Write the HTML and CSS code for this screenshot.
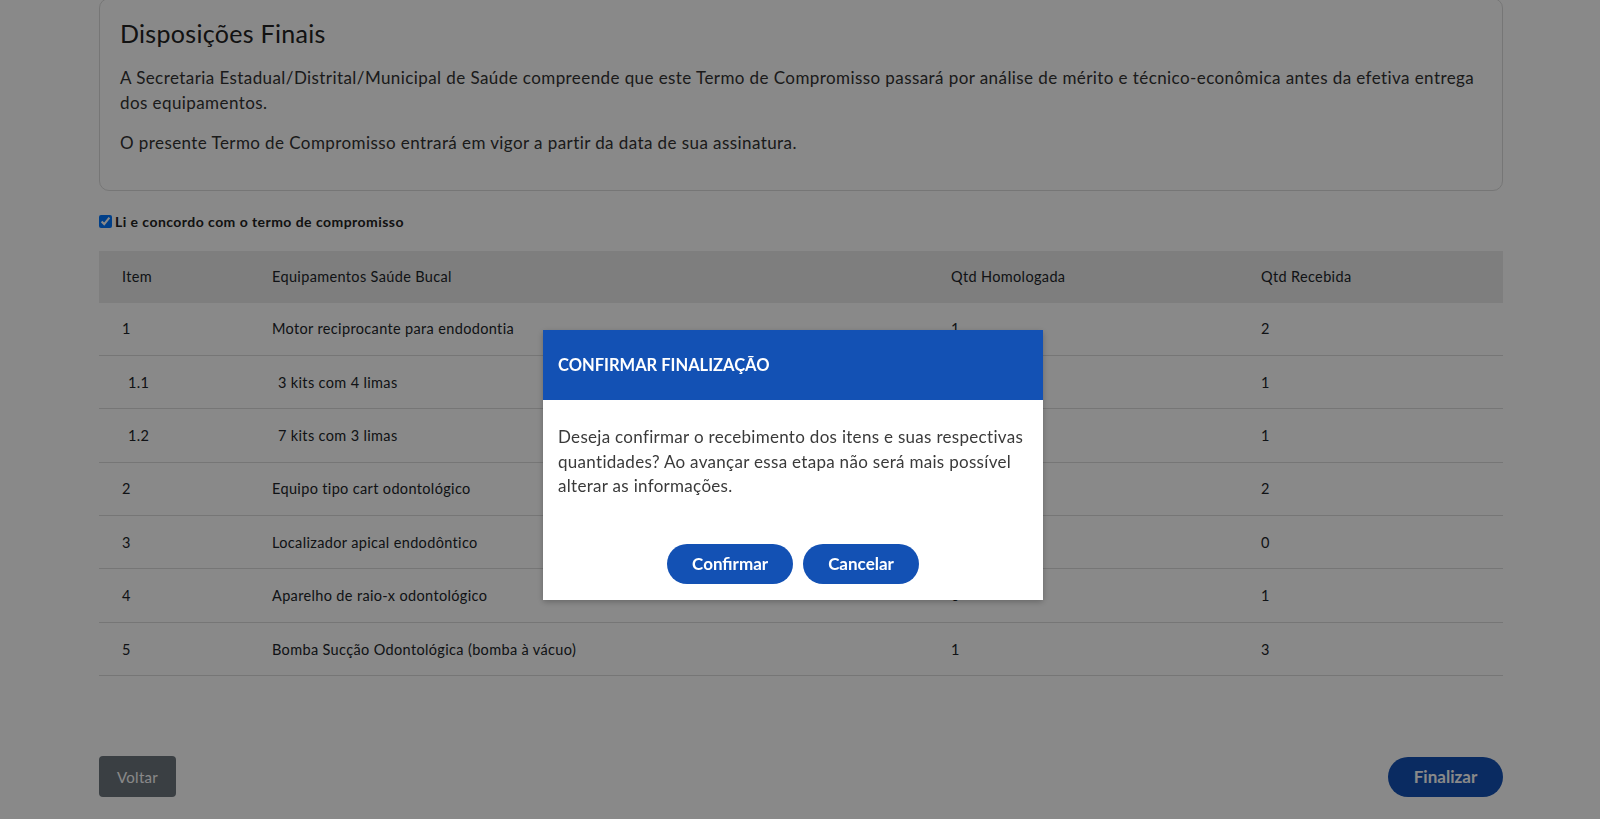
FILE: index.html
```html
<!DOCTYPE html>
<html lang="pt-BR">
<head>
<meta charset="utf-8">
<title>Termo de Compromisso</title>
<link rel="stylesheet" href="styles.css">
</head>
<body>
<div class="page">
  <section class="card">
    <h2 class="card-title">Disposições Finais</h2>
    <p class="card-text">A Secretaria Estadual/Distrital/Municipal de Saúde compreende que este Termo de Compromisso passará por análise de mérito e técnico-econômica antes da efetiva entrega dos equipamentos.</p>
    <p class="card-text">O presente Termo de Compromisso entrará em vigor a partir da data de sua assinatura.</p>
  </section>

  <label class="agree">
    <input type="checkbox" class="agree-box" checked>
    <span>Li e concordo com o termo de compromisso</span>
  </label>

  <div class="table">
    <div class="row head">
      <div class="cell">Item</div>
      <div class="cell">Equipamentos Saúde Bucal</div>
      <div class="cell">Qtd Homologada</div>
      <div class="cell">Qtd Recebida</div>
    </div>
    <div class="row">
      <div class="cell">1</div>
      <div class="cell">Motor reciprocante para endodontia</div>
      <div class="cell">1</div>
      <div class="cell">2</div>
    </div>
    <div class="row">
      <div class="cell sub">1.1</div>
      <div class="cell sub">3 kits com 4 limas</div>
      <div class="cell">1</div>
      <div class="cell">1</div>
    </div>
    <div class="row">
      <div class="cell sub">1.2</div>
      <div class="cell sub">7 kits com 3 limas</div>
      <div class="cell">1</div>
      <div class="cell">1</div>
    </div>
    <div class="row">
      <div class="cell">2</div>
      <div class="cell">Equipo tipo cart odontológico</div>
      <div class="cell">1</div>
      <div class="cell">2</div>
    </div>
    <div class="row">
      <div class="cell">3</div>
      <div class="cell">Localizador apical endodôntico</div>
      <div class="cell">1</div>
      <div class="cell">0</div>
    </div>
    <div class="row">
      <div class="cell">4</div>
      <div class="cell">Aparelho de raio-x odontológico</div>
      <div class="cell">0</div>
      <div class="cell">1</div>
    </div>
    <div class="row">
      <div class="cell">5</div>
      <div class="cell">Bomba Sucção Odontológica (bomba à vácuo)</div>
      <div class="cell">1</div>
      <div class="cell">3</div>
    </div>
  </div>

  <div class="actions">
    <button class="btn-back" type="button">Voltar</button>
    <button class="btn-pill btn-finish" type="button">Finalizar</button>
  </div>
</div>

<div class="backdrop"></div>

<div class="modal" role="dialog" aria-modal="true">
  <div class="modal-header">
    <h3 class="modal-title">CONFIRMAR FINALIZAÇÃO</h3>
  </div>
  <div class="modal-body">
    <p class="modal-text">Deseja confirmar o recebimento dos itens e suas respectivas quantidades? Ao avançar essa etapa não será mais possível alterar as informações.</p>
  </div>
  <div class="modal-footer">
    <button class="btn-pill btn-modal" type="button">Confirmar</button>
    <button class="btn-pill btn-modal" type="button">Cancelar</button>
  </div>
</div>
</body>
</html>
```

FILE: styles.css
```css
* { box-sizing: border-box; }

html, body {
  margin: 0;
  padding: 0;
  background: #ffffff;
  font-family: Lato, "Open Sans", "Liberation Sans", sans-serif;
  color: #333333;
  overflow: hidden;
}

.page {
  width: 1404px;
  margin-left: 99px;
}

.card {
  margin-top: -2px;
  border: 1px solid #dcdcdc;
  border-radius: 10px;
  padding: 20px 20px 18px 20px;
}

.card-title {
  margin: 0 0 18px 0;
  font-size: 25px;
  font-weight: 400;
  line-height: 29px;
  letter-spacing: 0.3px;
  color: #222222;
}

.card-text {
  margin: 0 0 16px 0;
  font-size: 17px;
  line-height: 24.5px;
  letter-spacing: 0.42px;
  color: #333333;
}

.agree {
  display: flex;
  align-items: center;
  gap: 3px;
  margin-top: 22px;
  font-size: 14px;
  font-weight: 700;
  letter-spacing: 0.45px;
  color: #222222;
  height: 17px;
}

.agree-box {
  margin: 0;
  width: 13px;
  height: 13px;
}

.table {
  margin-top: 21px;
  font-size: 14.5px;
  letter-spacing: 0.35px;
  color: #212529;
}

.row {
  display: grid;
  grid-template-columns: 150px 679px 310px 1fr;
  height: 53.4px;
  align-items: center;
  border-bottom: 1px solid #dcdcdc;
}

.row.head {
  height: 52px;
  background: #ebebeb;
  border-bottom: none;
}

.cell {
  padding-left: 23px;
}

.cell.sub {
  padding-left: 29px;
}

.actions {
  display: flex;
  justify-content: space-between;
  align-items: center;
  margin-top: 80px;
}

button {
  font-family: inherit;
  border: none;
  cursor: pointer;
}

.btn-back {
  width: 77px;
  height: 41px;
  border-radius: 4px;
  background: #6c757d;
  color: #ffffff;
  font-size: 15px;
  font-weight: 400;
  letter-spacing: 0.3px;
}

.btn-pill {
  border-radius: 999px;
  background: #1351b4;
  color: #ffffff;
  font-size: 17px;
  font-weight: 700;
}

.btn-finish {
  width: 115px;
  height: 40px;
}

.backdrop {
  position: fixed;
  inset: 0;
  background: rgba(0, 0, 0, 0.463);
}

.modal {
  position: fixed;
  left: 543px;
  top: 330px;
  width: 500px;
  background: #ffffff;
  box-shadow: 0 2px 6px rgba(0, 0, 0, 0.25);
}

.modal-header {
  height: 70px;
  display: flex;
  align-items: center;
  padding: 0 15px;
  background: #1351b4;
}

.modal-title {
  margin: 0;
  font-size: 16.5px;
  font-weight: 700;
  color: #ffffff;
}

.modal-body {
  padding: 25px 15px 0 15px;
}

.modal-text {
  margin: 0;
  font-size: 17px;
  line-height: 24.5px;
  letter-spacing: 0.3px;
  color: #3a3a3a;
}

.modal-footer {
  display: flex;
  justify-content: center;
  gap: 10px;
  padding: 45px 0 16px 0;
}

.btn-modal {
  height: 40px;
  padding: 0 25px;
}
```
